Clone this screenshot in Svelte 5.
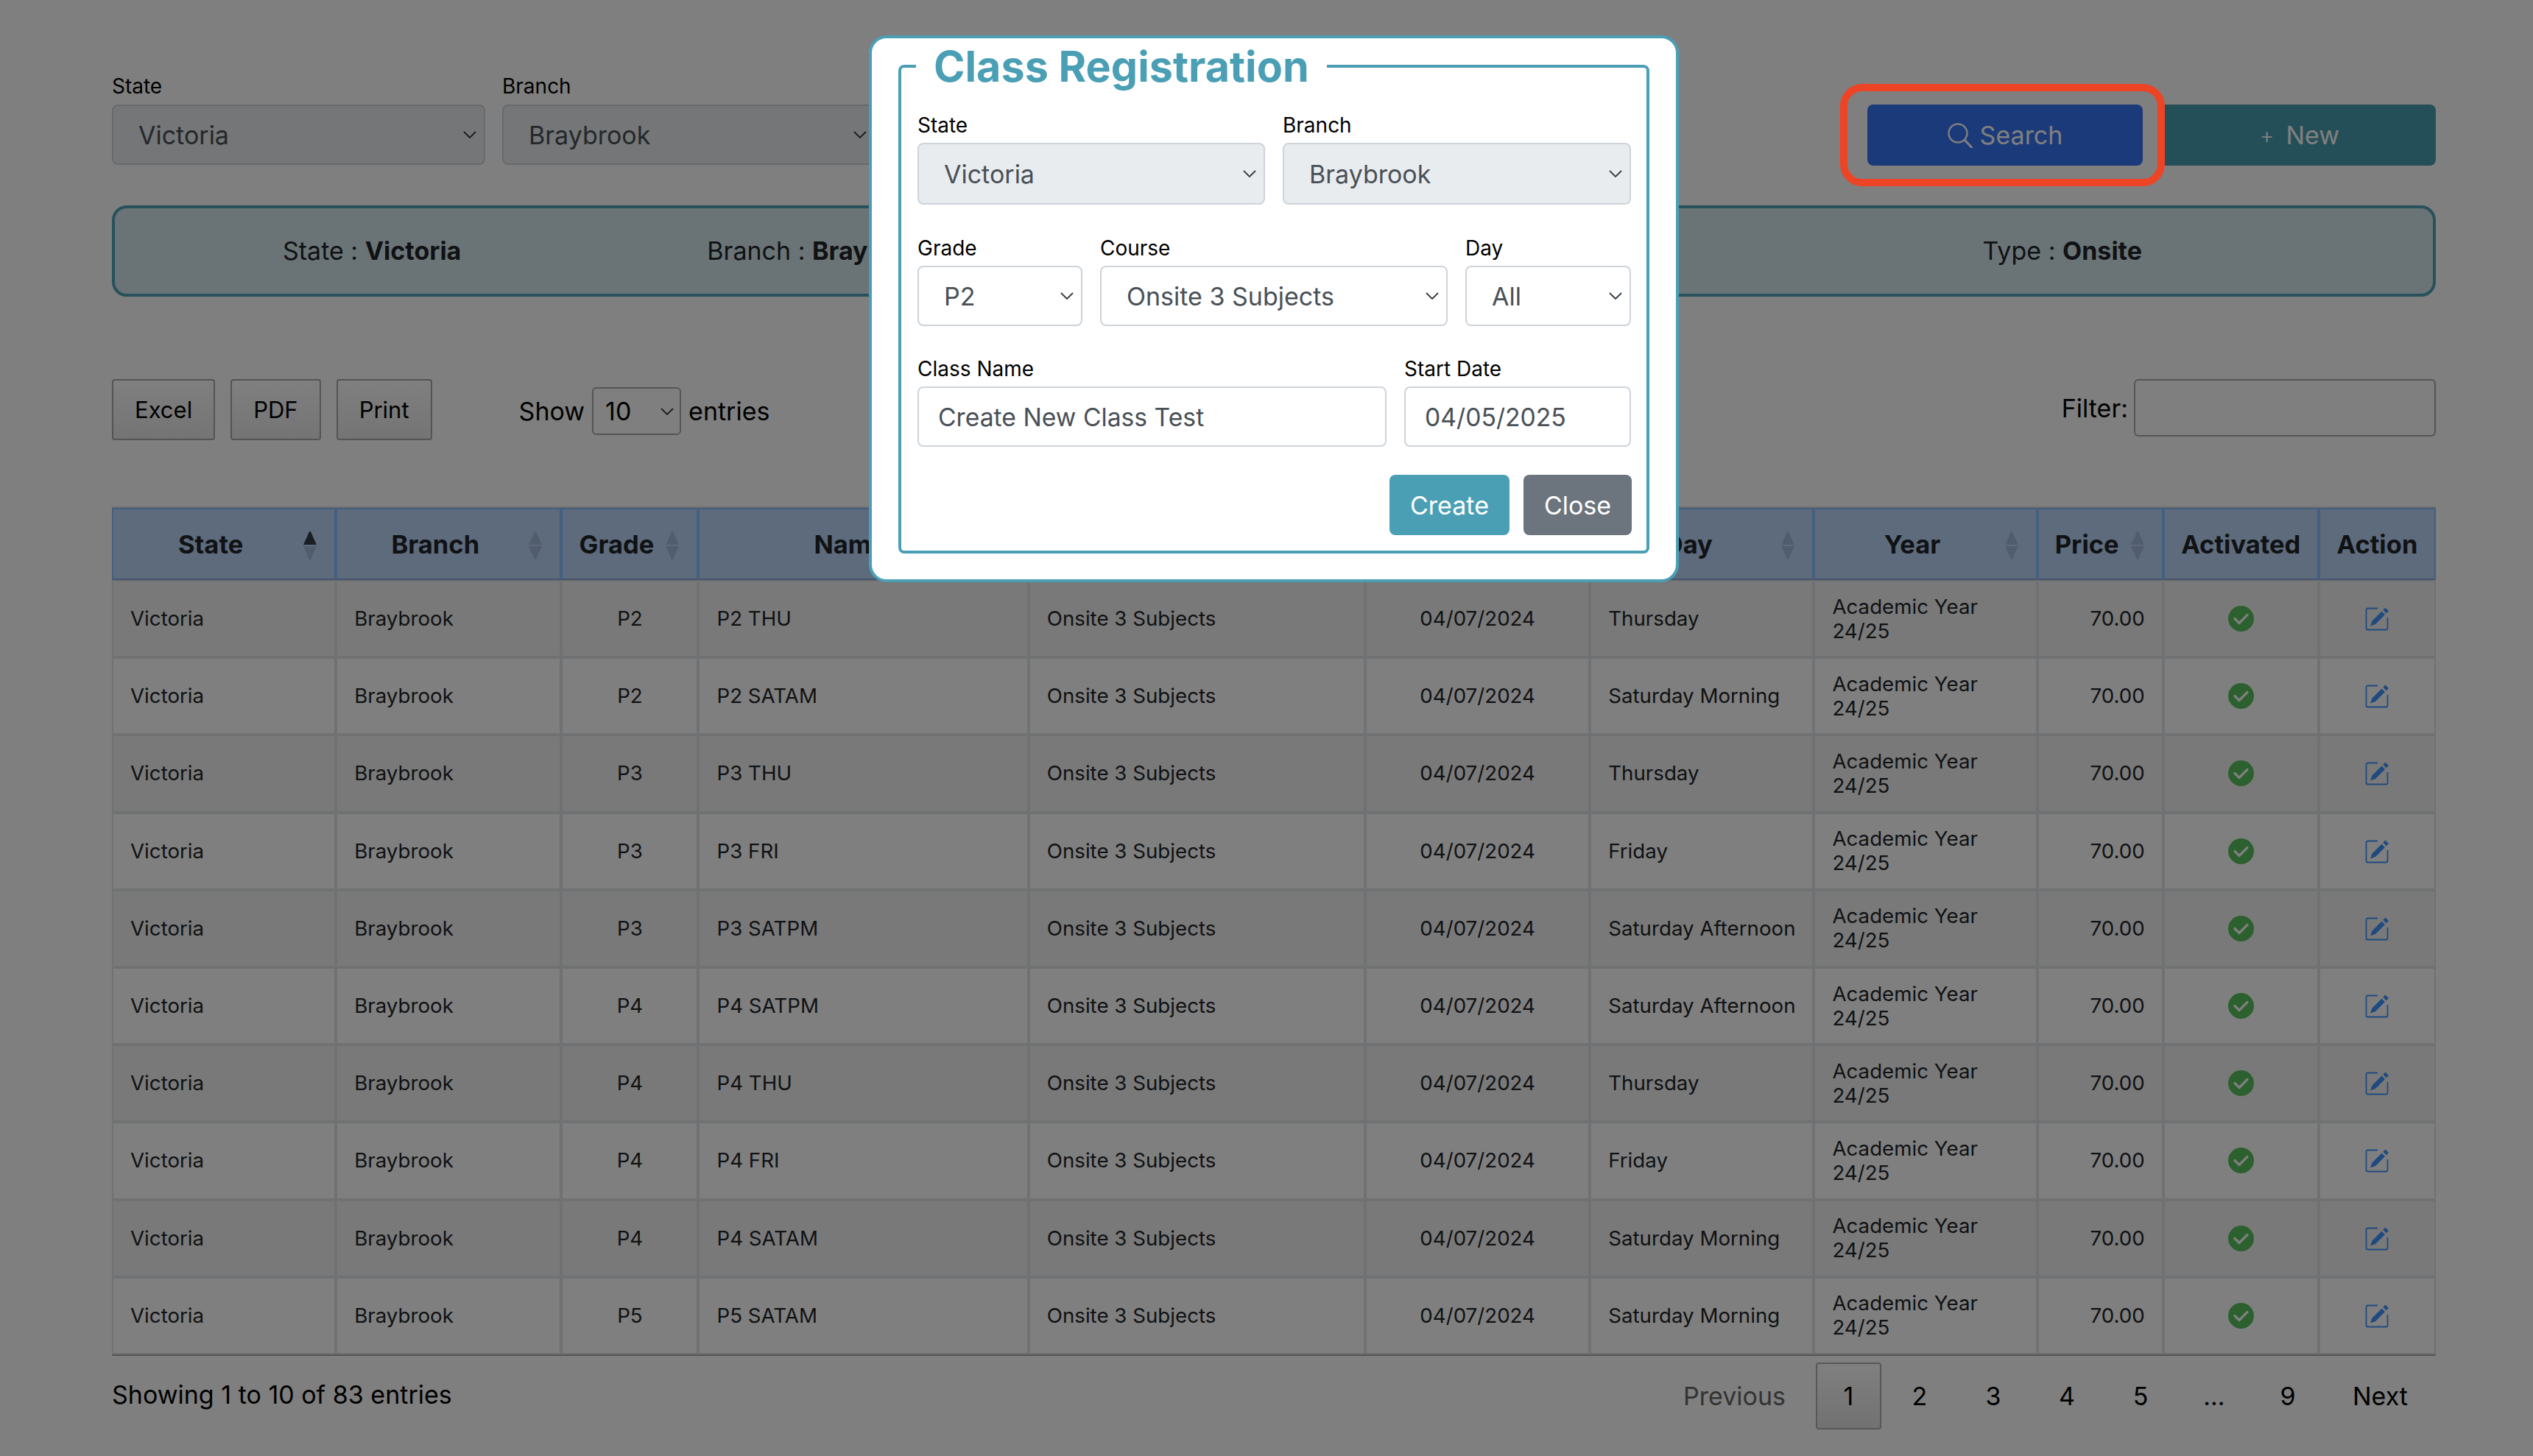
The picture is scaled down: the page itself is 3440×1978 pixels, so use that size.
<script>
	const columns = [
		{ name: 'State', width: 304, sort: 'asc' },
		{ name: 'Branch', width: 306, sort: 'none' },
		{ name: 'Grade', width: 186, sort: 'none' },
		{ name: 'Name', width: 448, sort: 'none' },
		{ name: 'Course', width: 457, sort: 'none' },
		{ name: 'Start Date', width: 305, sort: 'none' },
		{ name: 'Day', width: 304, sort: 'none' },
		{ name: 'Year', width: 303, sort: 'none' },
		{ name: 'Price', width: 171, sort: 'none' },
		{ name: 'Activated', width: 211 },
		{ name: 'Action', width: 159 }
	];

	const rows = [
		['P2', 'P2 THU', 'Thursday'],
		['P2', 'P2 SATAM', 'Saturday Morning'],
		['P3', 'P3 THU', 'Thursday'],
		['P3', 'P3 FRI', 'Friday'],
		['P3', 'P3 SATPM', 'Saturday Afternoon'],
		['P4', 'P4 SATPM', 'Saturday Afternoon'],
		['P4', 'P4 THU', 'Thursday'],
		['P4', 'P4 FRI', 'Friday'],
		['P4', 'P4 SATAM', 'Saturday Morning'],
		['P5', 'P5 SATAM', 'Saturday Morning']
	];

	const pages = ['2', '3', '4', '5', '...', '9'];
</script>

<div class="page">
	<div class="filters">
		<div class="field">
			<label for="f-state">State</label>
			<select id="f-state" class="form-select" disabled><option>Victoria</option></select>
		</div>
		<div class="field">
			<label for="f-branch">Branch</label>
			<select id="f-branch" class="form-select" disabled><option>Braybrook</option></select>
		</div>
		<div class="actions">
			<button class="btn-search">
				<svg width="34" height="34" viewBox="0 0 34 34" fill="none" stroke="currentColor" stroke-width="2.4">
					<circle cx="14" cy="14" r="12.5" />
					<path d="M23.5 23.5 L32.5 33" stroke-width="3" stroke-linecap="round" />
				</svg>
				Search
			</button>
			<button class="btn-new"><span class="plus">+</span> New</button>
		</div>
	</div>

	<div class="summary">
		<span>State : <b>Victoria</b></span>
		<span>Branch : <b>Braybrook</b></span>
		<span class="type">Type : <b>Onsite</b></span>
	</div>

	<div class="toolbar">
		<button class="dt-btn">Excel</button>
		<button class="dt-btn">PDF</button>
		<button class="dt-btn">Print</button>
		<div class="length">
			Show
			<select class="length-select"><option>10</option></select>
			entries
		</div>
		<div class="filter">
			Filter:
			<input class="filter-input" type="text" />
		</div>
	</div>

	<table>
		<colgroup>
			{#each columns as col}
				<col style="width: {col.width}px" />
			{/each}
		</colgroup>
		<thead>
			<tr>
				{#each columns as col}
					<th class:sortable={col.sort}>
						{col.name}
						{#if col.sort}
							<svg class="sort" width="18" height="38" viewBox="0 0 18 38">
								<path class:on={col.sort === 'asc'} d="M9 0 C10.5 0 11 2 12 5 L18 18 L0 18 L6 5 C7 2 7.5 0 9 0Z" />
								<path d="M9 38 C10.5 38 11 36 12 33 L18 20 L0 20 L6 33 C7 36 7.5 38 9 38Z" />
							</svg>
						{/if}
					</th>
				{/each}
			</tr>
		</thead>
		<tbody>
			{#each rows as row}
				<tr>
					<td>Victoria</td>
					<td>Braybrook</td>
					<td class="center">{row[0]}</td>
					<td>{row[1]}</td>
					<td>Onsite 3 Subjects</td>
					<td class="center">04/07/2024</td>
					<td class="nowrap">{row[2]}</td>
					<td>Academic Year 24/25</td>
					<td class="right">70.00</td>
					<td class="center">
						<svg class="icon" width="35" height="35" viewBox="0 0 35 35">
							<circle cx="17.5" cy="17.5" r="17.5" fill="#58c25e" />
							<path d="M9 17.5 L15 23.5 L26 12.5" fill="none" stroke="#fff" stroke-width="3.2" stroke-linecap="round" stroke-linejoin="round" />
						</svg>
					</td>
					<td class="center">
						<svg class="icon" width="33" height="33" viewBox="0 0 33 33">
							<path d="M17 2.5 H3.5 A2 2 0 0 0 1.5 4.5 V29.5 A2 2 0 0 0 3.5 31.5 H28.5 A2 2 0 0 0 30.5 29.5 V15" fill="none" stroke="#3e94ff" stroke-width="1.8" />
							<path d="M7 26.5 L9.5 19.5 L22.5 6.5 L27 11 L14 24 Z M24.3 4.7 L27.5 1.5 L32 6 L28.8 9.2 Z" fill="#3e94ff" />
						</svg>
					</td>
				</tr>
			{/each}
		</tbody>
	</table>

	<div class="footer">
		<div class="info">Showing 1 to 10 of 83 entries</div>
		<div class="pagination">
			<span class="page-btn muted">Previous</span>
			<span class="page-btn current">1</span>
			{#each pages as p}
				<span class="page-btn num">{p}</span>
			{/each}
			<span class="page-btn next">Next</span>
		</div>
	</div>
</div>

<div class="backdrop"></div>
<div class="annotation"></div>

<div class="modal">
	<fieldset>
		<legend>Class Registration</legend>
		<div class="modal-row two">
			<div class="field">
				<label for="m-state">State</label>
				<select id="m-state" class="form-select" disabled><option>Victoria</option></select>
			</div>
			<div class="field">
				<label for="m-branch">Branch</label>
				<select id="m-branch" class="form-select" disabled><option>Braybrook</option></select>
			</div>
		</div>
		<div class="modal-row three">
			<div class="field">
				<label for="m-grade">Grade</label>
				<select id="m-grade" class="form-select"><option>P2</option></select>
			</div>
			<div class="field">
				<label for="m-course">Course</label>
				<select id="m-course" class="form-select"><option>Onsite 3 Subjects</option></select>
			</div>
			<div class="field">
				<label for="m-day">Day</label>
				<select id="m-day" class="form-select"><option>All</option></select>
			</div>
		</div>
		<div class="modal-row name">
			<div class="field">
				<label for="m-name">Class Name</label>
				<input id="m-name" class="form-input" type="text" value="Create New Class Test" />
			</div>
			<div class="field">
				<label for="m-date">Start Date</label>
				<input id="m-date" class="form-input" type="text" value="04/05/2025" />
			</div>
		</div>
		<div class="modal-actions">
			<button class="btn-create">Create</button>
			<button class="btn-close">Close</button>
		</div>
	</fieldset>
</div>

<style>
	:global(body) {
		margin: 0;
		background: #fff;
		font-family: Inter, 'Liberation Sans', sans-serif;
		color: #212529;
	}

	.page {
		box-sizing: border-box;
		width: 3440px;
		height: 1978px;
		padding: 100px 132px 0 152px;
		overflow: hidden;
	}

	.filters {
		display: grid;
		grid-template-columns: 507px 507px 1fr;
		column-gap: 23px;
	}

	.field {
		display: flex;
		flex-direction: column;
		min-width: 0;
	}

	label {
		font-size: 28px;
		line-height: 34px;
		margin-bottom: 8px;
		color: #000;
	}

	.form-select {
		appearance: none;
		box-sizing: border-box;
		width: 100%;
		height: 82px;
		padding: 0 40px 0 34px;
		border: 2px solid #ced4da;
		border-radius: 8px;
		background-color: #fff;
		background-image: url("data:image/svg+xml,%3Csvg xmlns='http://www.w3.org/2000/svg' width='18' height='10' viewBox='0 0 18 10'%3E%3Cpath d='M1 1l8 8 8-8' fill='none' stroke='%23343a40' stroke-width='1.8'/%3E%3C/svg%3E");
		background-repeat: no-repeat;
		background-position: right 10px center;
		font-family: inherit;
		font-size: 34px;
		color: #495057;
		opacity: 1;
	}

	.form-select:disabled {
		background-color: #e9ecef;
	}

	.form-input {
		box-sizing: border-box;
		width: 100%;
		height: 82px;
		padding: 0 26px;
		border: 2px solid #ced4da;
		border-radius: 8px;
		background: #fff;
		font-family: inherit;
		font-size: 33.7px;
		color: #495057;
	}

	button {
		font-family: inherit;
		cursor: pointer;
	}

	.actions {
		display: flex;
		justify-content: flex-end;
		align-items: flex-start;
		gap: 24px;
		padding-top: 42px;
	}

	.btn-search,
	.btn-new {
		display: flex;
		align-items: center;
		justify-content: center;
		gap: 10px;
		width: 374px;
		height: 83px;
		border: none;
		border-radius: 8px;
		color: #fff;
		font-size: 34px;
	}

	.btn-search {
		background: #3675f5;
	}

	.btn-new {
		background: #4a9fb0;
		gap: 16px;
		padding-left: 10px;
	}

	.plus {
		font-size: 30px;
		font-weight: 300;
	}

	.summary {
		box-sizing: border-box;
		display: flex;
		align-items: center;
		height: 124px;
		margin-top: 54px;
		padding: 0 395px 2px 228px;
		border: 4px solid #50a2b6;
		border-radius: 20px;
		background: #d5e8ee;
		font-size: 34px;
		color: #212529;
	}

	.summary span:nth-child(2) {
		margin-left: 334px;
	}

	.summary .type {
		margin-left: auto;
	}

	.toolbar {
		display: flex;
		align-items: flex-start;
		height: 83px;
		margin-top: 112px;
		font-size: 34px;
		color: #000;
	}

	.dt-btn {
		box-sizing: border-box;
		height: 83px;
		padding: 0 29px;
		margin-right: 21px;
		border: 2px solid #a8a8a8;
		border-radius: 4px;
		background: linear-gradient(#fff, #e9e9e9);
		font-size: 31px;
		color: #000;
	}

	.length {
		display: flex;
		align-items: center;
		gap: 10px;
		height: 65px;
		margin-top: 11px;
		margin-left: 97px;
	}

	.length-select {
		appearance: none;
		box-sizing: border-box;
		width: 121px;
		height: 65px;
		padding: 0 0 0 16px;
		border: 2px solid #aaa;
		border-radius: 6px;
		background: #fff url("data:image/svg+xml,%3Csvg xmlns='http://www.w3.org/2000/svg' width='18' height='10' viewBox='0 0 18 10'%3E%3Cpath d='M1 1l8 8 8-8' fill='none' stroke='%23343a40' stroke-width='1.8'/%3E%3C/svg%3E") no-repeat right 8px center;
		font-family: inherit;
		font-size: 34px;
		color: #000;
	}

	.filter {
		display: flex;
		align-items: center;
		gap: 8px;
		margin-left: auto;
		height: 78px;
	}

	.filter-input {
		box-sizing: border-box;
		width: 410px;
		height: 78px;
		border: 2px solid #aaa;
		border-radius: 6px;
		background: #fff;
	}

	table {
		box-sizing: border-box;
		width: 3156px;
		margin-top: 90px;
		border-collapse: separate;
		border-spacing: 0;
		table-layout: fixed;
		border-top: 2px solid #dcdcdc;
		border-bottom: 2px solid #aaa;
		font-size: 27.7px;
	}

	th {
		position: relative;
		box-sizing: border-box;
		height: 98px;
		padding: 0 12px;
		border: 2px solid #88bfff;
		border-bottom-color: #88a6d4;
		background: #bad6fa;
		font-size: 34.5px;
		font-weight: 700;
		color: #212529;
		text-align: center;
	}

	th.sortable {
		padding-right: 48px;
	}

	.sort {
		position: absolute;
		top: 30px;
		right: 24px;
		fill: rgba(0, 0, 0, 0.125);
	}

	.sort .on {
		fill: rgba(0, 0, 0, 0.72);
	}

	td {
		box-sizing: border-box;
		height: 105.2px;
		padding: 0 23px;
		border: 2px solid #dee2e6;
		line-height: 33px;
		color: #212529;
		vertical-align: middle;
	}

	tbody tr:nth-child(odd) td {
		background: #f3f3f3;
	}

	.center {
		text-align: center;
	}

	.right {
		text-align: right;
	}

	.nowrap {
		white-space: nowrap;
	}

	.icon {
		display: block;
		margin: 0 auto;
	}

	.footer {
		display: flex;
		justify-content: space-between;
		align-items: center;
		height: 91px;
		margin-top: 9px;
		font-size: 34px;
		color: #000;
	}

	.info {
		padding-bottom: 4px;
	}

	.pagination {
		display: flex;
		align-items: stretch;
		height: 91px;
	}

	.page-btn {
		box-sizing: border-box;
		display: flex;
		align-items: center;
		justify-content: center;
		padding: 0 38px;
		border: 2px solid transparent;
		border-radius: 4px;
	}

	.page-btn.num {
		width: 100px;
		padding: 0;
	}

	.page-btn.next {
		padding: 0 36px;
	}

	.page-btn.muted {
		margin-right: 1px;
		color: #666;
	}

	.page-btn.current {
		width: 89px;
		margin-right: 2px;
		padding: 0;
		border-color: #b0b0b0;
		background: linear-gradient(#fff, #e4e4e4);
	}

	.backdrop {
		position: absolute;
		inset: 0;
		height: 1978px;
		background: rgba(0, 0, 0, 0.5);
	}

	.annotation {
		position: absolute;
		left: 2499px;
		top: 114px;
		box-sizing: border-box;
		width: 441px;
		height: 139px;
		border: 10px solid #ee4426;
		border-radius: 30px;
	}

	.modal {
		position: absolute;
		left: 1180px;
		top: 48px;
		box-sizing: border-box;
		width: 1100px;
		height: 743px;
		padding: 2px 36px 0;
		border: 4px solid #4b9fb5;
		border-radius: 24px;
		background: #fff;
	}

	fieldset {
		box-sizing: border-box;
		height: 698px;
		margin: 0;
		padding: 27px 22px 0;
		border: 4px solid #4b9fb5;
		border-radius: 8px;
		min-width: 0;
	}

	legend {
		margin-left: -2px;
		padding: 0 24px;
		font-size: 57.5px;
		line-height: 72px;
		font-weight: 700;
		color: #4b9fb5;
	}

	.modal-row {
		display: grid;
		column-gap: 24px;
		margin-bottom: 41px;
	}

	.modal-row label {
		margin-bottom: 7px;
	}

	.modal-row.two {
		grid-template-columns: 472px 473px;
		margin-bottom: 42px;
	}

	.modal-row.two .form-select {
		height: 84px;
	}

	.modal-row.three {
		grid-template-columns: 224px 472px 225px;
	}

	.modal-row.name {
		grid-template-columns: 637px 308px;
	}

	.modal-actions {
		display: flex;
		justify-content: flex-end;
		gap: 19px;
		margin-top: -3px;
		margin-right: -2px;
	}

	.btn-create,
	.btn-close {
		height: 82px;
		border: none;
		border-radius: 8px;
		color: #fff;
		font-size: 34px;
	}

	.btn-create {
		width: 163px;
		background: #4b9fb5;
	}

	.btn-close {
		width: 147px;
		background: #6c757d;
	}
</style>
